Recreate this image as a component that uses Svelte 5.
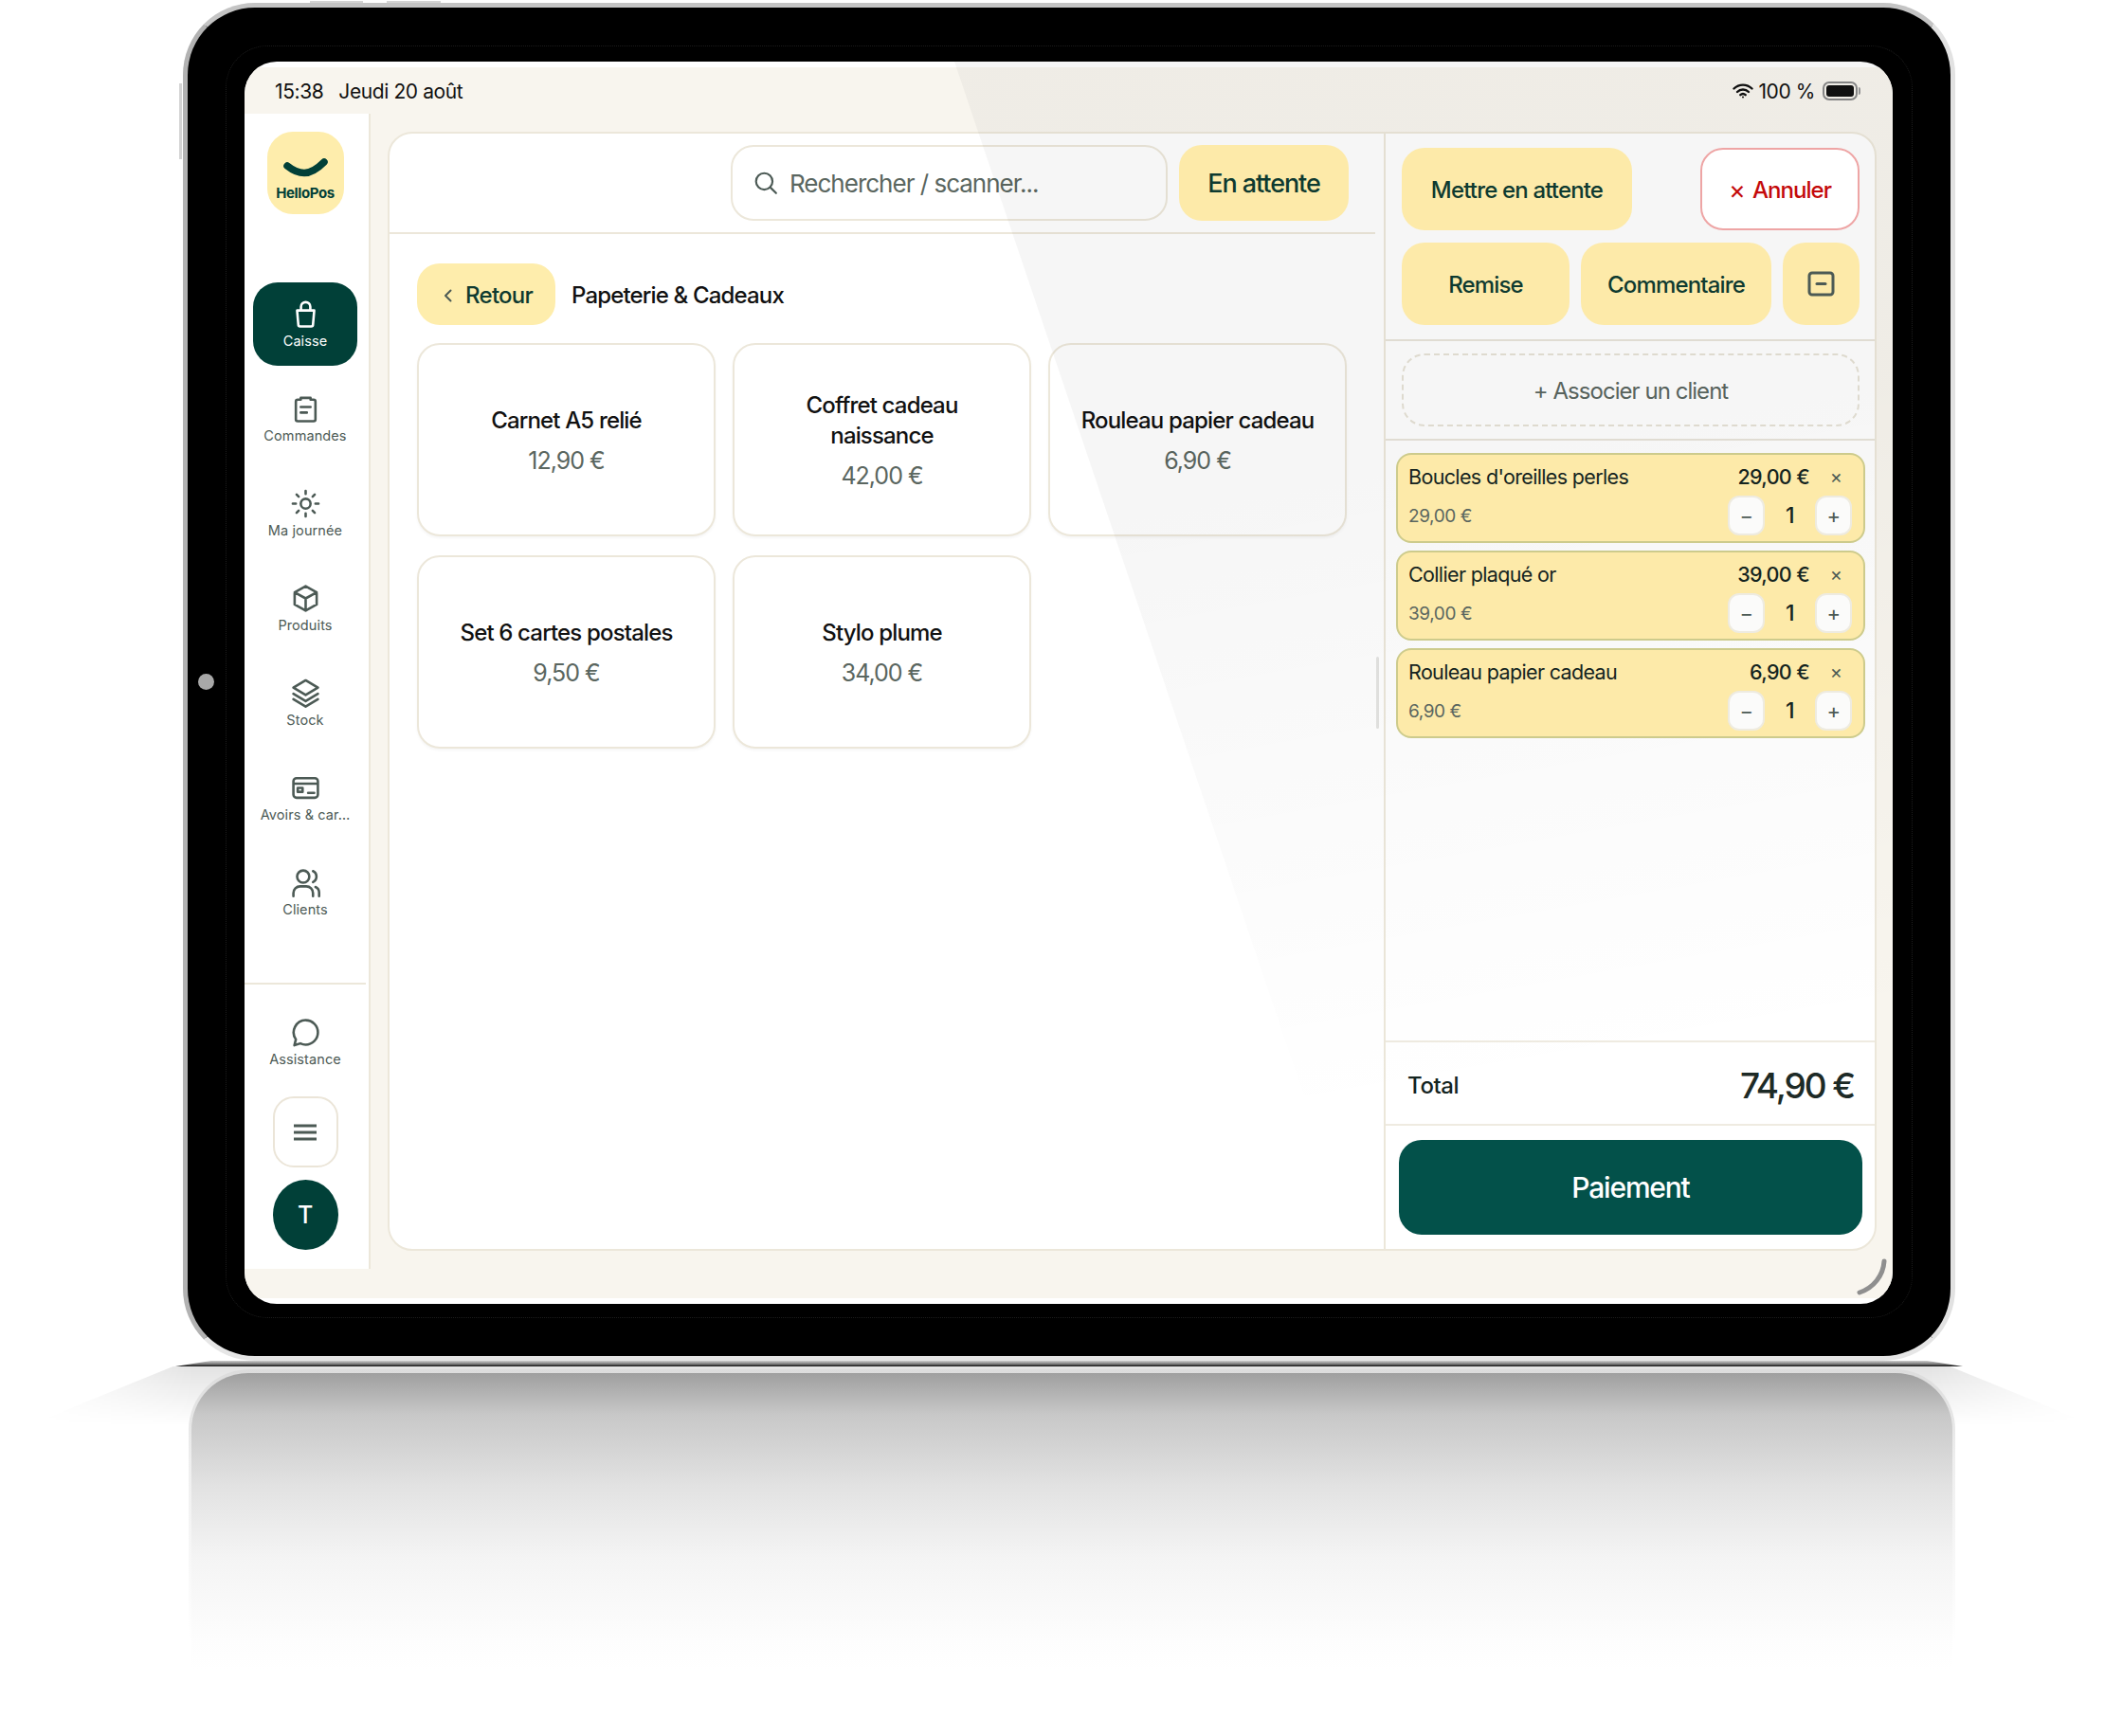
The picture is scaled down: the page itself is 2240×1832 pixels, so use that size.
<script>
	const ICONS = {
		bag: 'M5 9h14l-1 11.500a1.500 1.500 0 0 1-1.500 1.500h-9A1.500 1.500 0 0 1 6 20.500z M8.200 9V6a3.800 3.800 0 0 1 7.600 0v3',
		orders: 'M8 4.500H5.500A1.500 1.500 0 0 0 4 6v14.500A1.500 1.500 0 0 0 5.500 22h13a1.500 1.500 0 0 0 1.500-1.500V6a1.500 1.500 0 0 0-1.500-1.500H16 M8 4.500V3h8v1.500 M8 10.500h8 M8 15h5',
		sun: 'M16 12a4 4 0 1 1-8 0 4 4 0 0 1 8 0z M12 1.500v2.500 M12 20v2.500 M1.500 12H4 M20 12h2.500 M4.600 4.600l1.700 1.700 M17.700 17.700l1.700 1.700 M4.600 19.400l1.700-1.700 M17.700 6.300l1.700-1.700',
		box: 'M12 2l9 5v10l-9 5-9-5V7z M3 7l9 5 9-5 M12 12v10',
		layers: 'M12 1.500l10 6-10 6-10-6z M2 12.500l10 6 10-6 M2 17l10 6 10-6',
		card: 'M4.500 4h15A2.500 2.500 0 0 1 22 6.500v11a2.500 2.500 0 0 1-2.500 2.500h-15A2.500 2.500 0 0 1 2 17.500v-11A2.500 2.500 0 0 1 4.500 4z M2 8.500h20 M5.500 12h4v3.200h-4z M14 16h5',
		users: 'M15 7a5 5 0 1 1-10 0 5 5 0 0 1 10 0z M18 2.500a5 5 0 0 1 0 9 M2 23v-2.500a5.500 5.500 0 0 1 5.500-5.500h5a5.500 5.500 0 0 1 5.500 5.500V23 M20 15.500a5 5 0 0 1 3 4.500V23',
		chat: 'M12 2a10 10 0 0 1 0 20c-1.600 0-3-.4-4.300-1L2.800 22.500l1.200-4.800A10 10 0 0 1 12 2z'
	};

	const nav = [
		{ label: 'Caisse', icon: 'bag', active: true },
		{ label: 'Commandes', icon: 'orders' },
		{ label: 'Ma journée', icon: 'sun' },
		{ label: 'Produits', icon: 'box' },
		{ label: 'Stock', icon: 'layers' },
		{ label: 'Avoirs & car…', icon: 'card' },
		{ label: 'Clients', icon: 'users' }
	];

	const products = [
		{ name: 'Carnet A5 relié', price: '12,90 €' },
		{ name: 'Coffret cadeau naissance', price: '42,00 €' },
		{ name: 'Rouleau papier cadeau', price: '6,90 €' },
		{ name: 'Set 6 cartes postales', price: '9,50 €' },
		{ name: 'Stylo plume', price: '34,00 €' }
	];

	const lines = [
		{ name: "Boucles d'oreilles perles", price: '29,00 €', qty: 1 },
		{ name: 'Collier plaqué or', price: '39,00 €', qty: 1 },
		{ name: 'Rouleau papier cadeau', price: '6,90 €', qty: 1 }
	];
</script>

<div class="stage">
	<div class="floor-shadow"></div>
	<span class="hw-btn top-a"></span>
	<span class="hw-btn top-b"></span>
	<span class="hw-btn side"></span>
	<span class="camera"></span>

	<div class="device">
		<div class="screen">
			<div class="status">
				<div class="status-left"><span>15:38</span><span>Jeudi 20 août</span></div>
				<div class="status-right">
					<svg width="22" height="16" viewBox="0 0 22 16" fill="none" stroke="#111" stroke-width="2.400" stroke-linecap="round">
						<path d="M1.500 5.500a13.500 13.500 0 0 1 19 0" />
						<path d="M5 9a8.500 8.500 0 0 1 12 0" />
						<path d="M8.300 12.200a4 4 0 0 1 5.400 0" />
						<circle cx="11" cy="14.500" r="1" fill="#111" stroke="none" />
					</svg>
					<span>100 %</span>
					<span class="battery"><i></i></span>
				</div>
			</div>

			<div class="body">
				<aside class="sidebar">
					<div class="logo">
						<svg width="48" height="20" viewBox="0 0 48 20" fill="none">
							<path d="M5 8c5 4 10 7.500 18 7.500S38 10 44 4" stroke="#014038" stroke-width="7.500" stroke-linecap="round" />
						</svg>
						<span>HelloPos</span>
					</div>
					<nav>
						{#each nav as item}
							<div class="nav-item" class:active={item.active}>
								<svg class="nav-icon" viewBox="0 0 24 24" fill="none" stroke="currentColor" stroke-width="2" stroke-linecap="round" stroke-linejoin="round">
									<path d={ICONS[item.icon]} />
								</svg>
								<span>{item.label}</span>
							</div>
						{/each}
					</nav>
					<div class="side-foot">
						<div class="nav-item">
							<svg class="nav-icon" viewBox="0 0 24 24" fill="none" stroke="currentColor" stroke-width="2" stroke-linecap="round" stroke-linejoin="round">
								<path d={ICONS.chat} />
							</svg>
							<span>Assistance</span>
						</div>
						<button class="menu-btn" aria-label="Menu">
							<svg width="24" height="18" viewBox="0 0 24 18" stroke="#4c5a55" stroke-width="2.800">
								<path d="M0 2h24M0 9h24M0 16h24" />
							</svg>
						</button>
						<div class="avatar">T</div>
					</div>
				</aside>

				<main class="panel">
					<section class="catalog">
						<div class="topbar">
							<div class="search">
								<svg width="26" height="26" viewBox="0 0 24 24" fill="none" stroke="#4c5a55" stroke-width="2" stroke-linecap="round">
									<circle cx="10.500" cy="10.500" r="8" />
									<path d="M16.500 16.500L22 22" />
								</svg>
								<span>Rechercher / scanner...</span>
							</div>
							<button class="btn wait">En attente</button>
						</div>
						<div class="crumbs">
							<button class="btn back">
								<svg width="10" height="14" viewBox="0 0 10 14" fill="none" stroke="#4c5a55" stroke-width="2" stroke-linecap="round" stroke-linejoin="round">
									<path d="M7.500 1.500L2 7l5.500 5.500" />
								</svg>
								Retour
							</button>
							<h2>Papeterie &amp; Cadeaux</h2>
						</div>
						<div class="grid">
							{#each products as p}
								<div class="product">
									<strong>{p.name}</strong>
									<span>{p.price}</span>
								</div>
							{/each}
						</div>
						<span class="scroll-thumb"></span>
					</section>

					<section class="ticket">
						<div class="actions">
							<div class="row between">
								<button class="btn act hold">Mettre en attente</button>
								<button class="btn cancel"><span>×</span>Annuler</button>
							</div>
							<div class="row">
								<button class="btn act remise">Remise</button>
								<button class="btn act comment">Commentaire</button>
								<button class="btn act icon-only" aria-label="Réduire">
									<svg width="29" height="29" viewBox="0 0 29 29" fill="none" stroke="#4c5a55" stroke-width="3" stroke-linecap="round">
										<rect x="2" y="3" width="25" height="23" rx="3" />
										<path d="M10 14.500h9" />
									</svg>
								</button>
							</div>
						</div>
						<div class="client">
							<div class="client-btn">+ Associer un client</div>
						</div>
						<div class="lines">
							{#each lines as line}
								<div class="line">
									<div class="line-top">
										<span class="line-name">{line.name}</span>
										<b>{line.price}</b>
										<span class="remove">×</span>
									</div>
									<div class="line-bottom">
										<span class="unit">{line.price}</span>
										<div class="stepper">
											<button>−</button>
											<span>{line.qty}</span>
											<button>+</button>
										</div>
									</div>
								</div>
							{/each}
						</div>
						<div class="total">
							<span>Total</span>
							<b>74,90 €</b>
						</div>
						<div class="pay">
							<button>Paiement</button>
						</div>
					</section>
				</main>
			</div>
			<div class="screen-foot"></div>

			<div class="glare"></div>
			<svg class="corner" width="34" height="40" viewBox="0 0 34 40" fill="none">
				<path d="M30 3c-1 15-11 28-26 33" stroke="#8f8f8f" stroke-width="5" stroke-linecap="round" />
			</svg>
		</div>
	</div>

	<div class="contact"></div>
	<div class="reflection"><div class="reflection-in"></div></div>
</div>

<style>
	:global(body) {
		margin: 0;
		background: #fff;
	}
	* {
		box-sizing: border-box;
	}
	button {
		font: inherit;
		letter-spacing: inherit;
		border: none;
		padding: 0;
	}
	.stage {
		position: relative;
		width: 2240px;
		height: 1832px;
		padding: 3px 0 0 193px;
		overflow: hidden;
		background: #fff;
		font-family: Inter, 'Liberation Sans', sans-serif;
		letter-spacing: -0.025em;
		color: #14241f;
	}

	/* device shell */
	.device {
		position: relative;
		width: 1870px;
		height: 1433px;
		padding: 57px 61px 55px 60px;
		background: #000;
		border: 5px solid #d8d8d8;
		border-top-color: #c4c4c4;
		border-left-color: #b2b2b2;
		border-right-color: #e2e2e2;
		border-bottom-color: #e6e6e6;
		border-radius: 76px;
	}
	.device::after {
		content: '';
		position: absolute;
		inset: 40px;
		border: 1px dotted #1c1c1c;
		border-radius: 44px;
		pointer-events: none;
	}
	.hw-btn {
		position: absolute;
		background: #d4d4d4;
	}
	.top-a {
		left: 327px;
		top: 1px;
		width: 56px;
		height: 3px;
	}
	.top-b {
		left: 408px;
		top: 1px;
		width: 57px;
		height: 3px;
	}
	.side {
		left: 189px;
		top: 88px;
		width: 3px;
		height: 80px;
	}
	.camera {
		position: absolute;
		z-index: 2;
		left: 209px;
		top: 711px;
		width: 17px;
		height: 17px;
		border-radius: 50%;
		background: #a8a8a8;
	}
	.contact {
		position: relative;
		width: 1886px;
		height: 6px;
		margin: 0 0 0 -8px;
		background: linear-gradient(#cfcfcf, #777 60%, #0c0c0c);
		clip-path: polygon(2% 0, 98% 0, 100% 100%, 0 100%);
	}
	.reflection {
		position: relative;
		width: 1864px;
		height: 318px;
		margin: 3px 0 0 6px;
		padding: 4px 3px 0;
		border-radius: 64px 64px 0 0;
		background: linear-gradient(#dcdcdc, #eee 30%, #fff 90%);
	}
	.reflection-in {
		height: 100%;
		border-radius: 60px 60px 0 0;
		background: linear-gradient(#9f9f9f, #c8c8c8 14%, #e2e2e2 38%, #f4f4f4 62%, #fdfdfd 90%, #fff);
	}
	.floor-shadow {
		position: absolute;
		left: 30px;
		top: 1442px;
		width: 2180px;
		height: 62px;
		background: linear-gradient(#0000001c, #0000);
		clip-path: polygon(7% 0, 93% 0, 100% 100%, 0 100%);
		mask-image: linear-gradient(90deg, #0000, #000 8%, #000 92%, #0000);
	}

	/* screen */
	.screen {
		position: relative;
		z-index: 1;
		display: flex;
		flex-direction: column;
		width: 1739px;
		height: 1311px;
		padding: 6px 0;
		overflow: hidden;
		background: #fff;
		border-radius: 34px;
	}
	.status {
		display: flex;
		align-items: center;
		justify-content: space-between;
		height: 49px;
		padding: 1px 37px 0 32px;
		background: #f8f5ee;
		font-size: 21px;
		color: #111;
	}
	.status-left {
		display: flex;
		gap: 16px;
	}
	.status-right {
		display: flex;
		align-items: center;
		gap: 5px;
	}
	.battery {
		position: relative;
		display: block;
		width: 37px;
		height: 20px;
		margin-left: 3px;
		padding: 2px;
		border: 2px solid #8a8a8a;
		border-radius: 7px;
	}
	.battery::after {
		content: '';
		position: absolute;
		right: -5px;
		top: 4px;
		width: 2px;
		height: 8px;
		background: #999;
		border-radius: 0 2px 2px 0;
	}
	.battery i {
		display: block;
		height: 100%;
		background: #111;
		border-radius: 3px;
	}
	.body {
		display: flex;
		flex: 1;
		min-height: 0;
		background: #f8f5ee;
	}
	.screen-foot {
		height: 31px;
		background: #f8f5ee;
	}
	.glare {
		position: absolute;
		inset: 0;
		background: linear-gradient(170deg, #00000009 0%, #00000009 40%, #00000000 82%);
		clip-path: polygon(749px 0, 100% 0, 100% 100%, 1192px 100%);
		pointer-events: none;
	}
	.corner {
		position: absolute;
		right: 5px;
		bottom: 8px;
	}

	/* sidebar */
	.sidebar {
		display: flex;
		flex-direction: column;
		align-items: center;
		flex: none;
		width: 133px;
		padding-right: 3px;
		background: #fff;
		border-right: 2px solid #ece7da;
	}
	.logo {
		display: flex;
		flex-direction: column;
		align-items: center;
		width: 81px;
		height: 87px;
		margin-top: 19px;
		padding-top: 28px;
		background: #feedac;
		border-radius: 27px;
		color: #014038;
		font-size: 15px;
		font-weight: 700;
	}
	.logo span {
		margin-top: 7px;
	}
	nav {
		display: flex;
		flex-direction: column;
		gap: 12px;
		width: 100%;
		margin-top: 72px;
		padding: 0 9px;
	}
	.nav-item {
		display: flex;
		flex-direction: column;
		align-items: center;
		justify-content: center;
		gap: 4px;
		height: 88px;
		border-radius: 26px;
		color: #4c5a55;
		font-size: 14.500px;
		letter-spacing: 0.1px;
		white-space: nowrap;
	}
	.nav-item.active {
		background: #014038;
		color: #fff;
	}
	.nav-icon {
		width: 31px;
		height: 31px;
	}
	.side-foot {
		display: flex;
		flex-direction: column;
		align-items: center;
		width: 100%;
		margin-top: auto;
		padding-bottom: 20px;
		border-top: 2px solid #ece7da;
	}
	.side-foot .nav-item {
		width: 100%;
		margin-top: 17px;
	}
	.menu-btn {
		display: flex;
		align-items: center;
		justify-content: center;
		width: 69px;
		height: 75px;
		margin-top: 13px;
		background: #fff;
		border: 2px solid #ebe5d8;
		border-radius: 22px;
	}
	.avatar {
		display: flex;
		align-items: center;
		justify-content: center;
		width: 69px;
		height: 74px;
		margin-top: 13px;
		background: #014038;
		border-radius: 50%;
		color: #fff;
		font-size: 25px;
		font-weight: 500;
	}

	/* main panel */
	.panel {
		display: flex;
		flex: 1;
		min-width: 0;
		margin: 19px 17px 19px 18px;
		overflow: hidden;
		background: #fff;
		border: 2px solid #ece7da;
		border-radius: 26px;
	}
	.catalog {
		position: relative;
		flex: 1;
		min-width: 0;
	}
	.topbar {
		display: flex;
		justify-content: flex-end;
		gap: 12px;
		height: 106px;
		margin-right: 9px;
		padding: 12px 28px 0 0;
		border-bottom: 2px solid #ece7da;
	}
	.search {
		display: flex;
		align-items: center;
		gap: 12px;
		width: 461px;
		height: 80px;
		padding-left: 22px;
		background: #fff;
		border: 2px solid #ece7da;
		border-radius: 24px;
		color: #5a6660;
		font-size: 26px;
		letter-spacing: -1px;
	}
	.btn {
		position: relative;
		z-index: 1;
		background: #fdeaa9;
		color: #0e3a30;
		font-weight: 500;
		border-radius: 24px;
	}
	.wait {
		width: 179px;
		height: 80px;
		font-size: 27px;
		letter-spacing: -0.04em;
	}
	.crumbs {
		display: flex;
		align-items: center;
		gap: 17px;
		margin: 31px 0 19px 29px;
	}
	.back {
		display: flex;
		align-items: center;
		gap: 13px;
		width: 146px;
		height: 65px;
		padding: 2px 0 0 28px;
		background: #feedac;
		font-size: 24px;
		letter-spacing: -0.03em;
	}
	h2 {
		margin: 0;
		padding-top: 2px;
		font-size: 24px;
		font-weight: 500;
		letter-spacing: -0.035em;
		color: #111;
	}
	.grid {
		display: grid;
		grid-template-columns: repeat(3, 315px);
		grid-auto-rows: 204px;
		gap: 20px 18px;
		margin-left: 29px;
	}
	.product {
		display: flex;
		flex-direction: column;
		align-items: center;
		justify-content: center;
		gap: 11px;
		padding: 1px 20px 0;
		background: #fff;
		border: 2px solid #ece7da;
		border-radius: 24px;
		box-shadow: 0 2px 3px #0000000a;
		text-align: center;
	}
	.product strong {
		font-size: 24px;
		line-height: 32px;
		font-weight: 500;
		letter-spacing: -0.035em;
		color: #111;
	}
	.product span {
		font-size: 25px;
		letter-spacing: -0.04em;
		color: #5a6660;
	}
	.scroll-thumb {
		position: absolute;
		right: 5px;
		top: 552px;
		width: 3px;
		height: 76px;
		background: #e4e4e2;
		border-radius: 2px;
	}

	/* ticket */
	.ticket {
		display: flex;
		flex-direction: column;
		flex: none;
		width: 518px;
		border-left: 2px solid #ece7da;
	}
	.actions {
		display: flex;
		flex-direction: column;
		gap: 13px;
		padding: 15px 16px 15px 17px;
		border-bottom: 2px solid #e8e4da;
	}
	.row {
		display: flex;
		gap: 12px;
		height: 87px;
	}
	.between {
		justify-content: space-between;
	}
	.act {
		padding-top: 2px;
		font-size: 24px;
		letter-spacing: -0.035em;
	}
	.hold {
		width: 243px;
	}
	.remise {
		width: 177px;
	}
	.comment {
		width: 201px;
	}
	.icon-only {
		display: flex;
		align-items: center;
		justify-content: center;
		width: 81px;
		padding-top: 0;
	}
	.cancel {
		display: flex;
		align-items: center;
		justify-content: center;
		width: 168px;
		padding-top: 2px;
		background: #fff;
		border: 2px solid #eea5a5;
		color: #c40a0a;
		font-size: 24px;
		letter-spacing: -0.04em;
	}
	.cancel span {
		margin-right: 8px;
		font-size: 27px;
		font-weight: 400;
	}
	.client {
		padding: 13px 16px 13px 17px;
		border-bottom: 2px solid #e8e4da;
	}
	.client-btn {
		display: flex;
		align-items: center;
		justify-content: center;
		height: 77px;
		padding-top: 2px;
		border: 2px dashed #e6e2d6;
		border-radius: 24px;
		color: #5a6660;
		font-size: 24px;
		letter-spacing: -0.04em;
	}
	.lines {
		display: flex;
		flex-direction: column;
		flex: 1;
		gap: 8px;
		padding: 13px 10px 0 11px;
	}
	.line {
		position: relative;
		z-index: 1;
		height: 95px;
		padding: 7px 12px 0 11px;
		background: #fdeaa9;
		border: 2px solid #cdcb8c;
		border-radius: 16px;
	}
	.line-top {
		display: flex;
		align-items: center;
		height: 32px;
		font-size: 21.500px;
		letter-spacing: -0.03em;
	}
	.line-name {
		flex: 1;
	}
	.line-top b {
		font-weight: 500;
	}
	.remove {
		width: 34px;
		margin-left: 11px;
		text-align: center;
		color: #4c5a55;
		font-size: 20px;
	}
	.line-bottom {
		display: flex;
		align-items: center;
		justify-content: space-between;
		margin-top: 4px;
	}
	.unit {
		font-size: 19px;
		color: #5a6660;
	}
	.stepper {
		display: flex;
		align-items: center;
	}
	.stepper span {
		width: 53px;
		text-align: center;
		font-size: 23px;
		font-weight: 500;
	}
	.stepper button {
		width: 39px;
		height: 42px;
		background: #fbfbfa;
		border: 2px solid #eeebe0;
		border-radius: 12px;
		color: #4c5a55;
		font-size: 22px;
	}
	.total {
		display: flex;
		align-items: center;
		justify-content: space-between;
		height: 90px;
		padding: 4px 22px 0 23px;
		border-top: 2px solid #efebe1;
		border-bottom: 2px solid #efebe1;
	}
	.total span {
		font-size: 24px;
		font-weight: 500;
	}
	.total b {
		font-size: 37px;
		font-weight: 500;
		letter-spacing: -0.057em;
		color: #1d2a26;
	}
	.pay {
		padding: 15px 13px 15px 14px;
	}
	.pay button {
		display: block;
		width: 100%;
		height: 100px;
		background: #03514a;
		border-radius: 24px;
		color: #fff;
		font-size: 30px;
		font-weight: 500;
		letter-spacing: -0.04em;
	}
</style>
